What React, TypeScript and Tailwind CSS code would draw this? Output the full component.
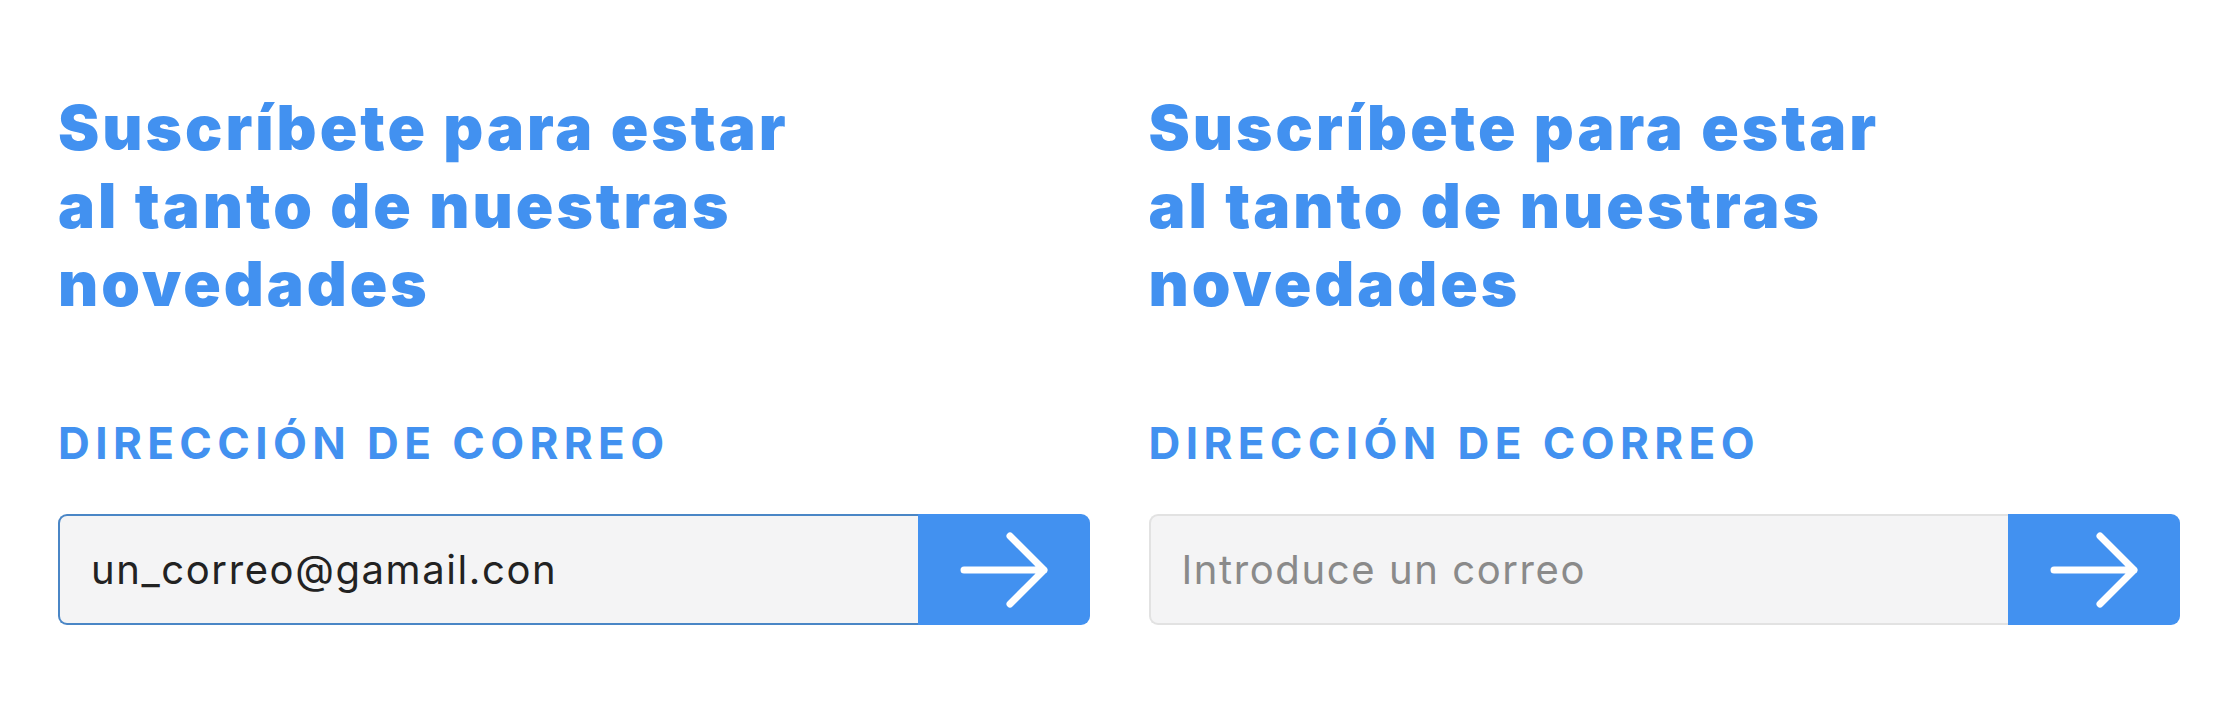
const ArrowIcon = () => (
  <svg width="90" height="76" viewBox="0 0 90 76" fill="none" aria-hidden="true">
    <path
      d="M5 38H85M51 4L85 38L51 72"
      stroke="white"
      strokeWidth="7"
      strokeLinecap="round"
      strokeLinejoin="round"
    />
  </svg>
);

type FormProps = {
  value?: string;
  focused?: boolean;
};

const SubscribeForm = ({ value, focused }: FormProps) => {
  return (
    <div className="flex flex-col">
      <h2 className="text-[62px] leading-[78px] font-black text-[#4291f0] tracking-[3px]">
        Suscríbete para estar
        <br />
        al tanto de nuestras
        <br />
        novedades
      </h2>

      <label className="mt-[98px] text-[44px] leading-[44px] font-bold text-[#4291f0] tracking-[5.4px]">
        DIRECCIÓN DE CORREO
      </label>

      <div className="mt-[49px] flex h-[111px]">
        <input
          type="email"
          readOnly
          defaultValue={value}
          placeholder="Introduce un correo"
          className={
            focused
              ? "flex-1 min-w-0 h-full rounded-l-[9px] border-y-2 border-l-2 border-[#4a86c6] bg-[#f4f4f5] pl-[31px] text-[40px] tracking-[1.6px] text-[#222] outline-none placeholder:text-[#8a8a8a]"
              : "flex-1 min-w-0 h-full rounded-l-[9px] border-y-2 border-l-2 border-[#e2e2e2] bg-[#f4f4f5] pl-[31px] text-[40px] tracking-[1.6px] text-[#222] outline-none placeholder:text-[#8a8a8a]"
          }
        />
        <button className="flex w-[172px] h-full items-center justify-center rounded-r-[9px] bg-[#4291f0]">
          <ArrowIcon />
        </button>
      </div>
    </div>
  );
};

export default function App() {
  return (
    <div
      className="w-[2238px] h-[712px] bg-white px-[58px] pt-[89px] grid grid-cols-2 gap-x-[59px]"
      style={{ fontFamily: "Inter, 'Liberation Sans', sans-serif" }}
    >
      <SubscribeForm value="un_correo@gamail.con" focused />
      <SubscribeForm />
    </div>
  );
}
